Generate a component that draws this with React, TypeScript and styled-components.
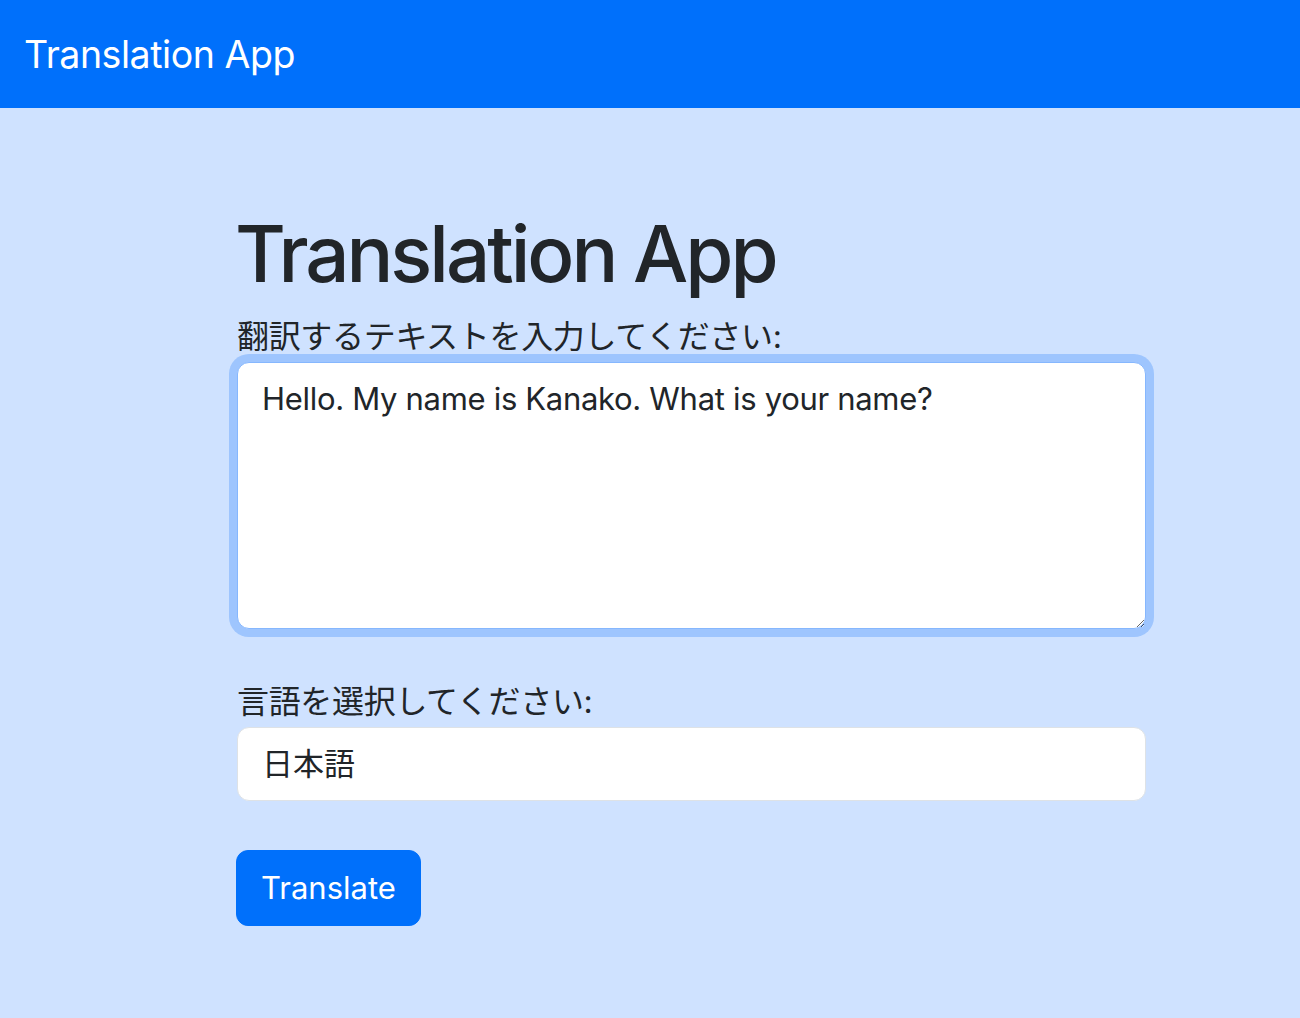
import React from "react";
import styled, { createGlobalStyle } from "styled-components";

const Global = createGlobalStyle`
  html, body { margin: 0; padding: 0; }
  body {
    background: #cfe2ff;
    color: #212529;
    font-family: Inter, "Noto Sans CJK JP", sans-serif;
    min-height: 1018px;
  }
  * { box-sizing: border-box; }
`;

const NavBar = styled.header`
  height: 108px;
  background: #0070fb;
  display: flex;
  align-items: center;
  padding: 0 24px;
`;

const Brand = styled.span`
  color: #ffffff;
  font-size: 37.5px;
  font-weight: 400;
  letter-spacing: -0.012em;
`;

const Main = styled.main`
  display: flex;
  flex-direction: column;
  align-items: flex-start;
  width: 909px;
  margin-left: 237px;
  padding-top: 98px;
`;

const Title = styled.h1`
  margin: 0 0 15px -2px;
  font-size: 78px;
  line-height: 96px;
  font-weight: 500;
  letter-spacing: -0.039em;
`;

const Group = styled.div<{ $mb: number }>`
  display: flex;
  flex-direction: column;
  width: 100%;
  margin-bottom: ${(p) => p.$mb}px;
`;

const Label = styled.label`
  font-size: 32px;
  line-height: 40px;
  margin-bottom: 5px;
  letter-spacing: -0.01em;
`;

const TextArea = styled.textarea`
  width: 100%;
  height: 267px;
  padding: 12px 24px;
  font-family: inherit;
  font-size: 31px;
  line-height: 48px;
  letter-spacing: -0.01em;
  color: #212529;
  background: #fff;
  border: 1px solid #86b7fe;
  border-radius: 12px;
  box-shadow: 0 0 0 8px rgba(13, 110, 253, 0.25);
  outline: none;
`;

const Select = styled.select`
  appearance: none;
  -webkit-appearance: none;
  width: 100%;
  height: 74px;
  padding: 12px 24px;
  font-family: inherit;
  font-size: 31px;
  line-height: 48px;
  color: #212529;
  background: #fff;
  border: 1px solid #dee2e6;
  border-radius: 12px;
  outline: none;
`;

const Button = styled.button`
  height: 76px;
  margin-left: -1px;
  padding: 0 24px;
  font-family: inherit;
  font-size: 31px;
  line-height: 48px;
  color: #fff;
  background: #0070fb;
  border: 1px solid #0070fb;
  border-radius: 12px;
  cursor: pointer;
`;

export default function App() {
  return (
    <>
      <Global />
      <NavBar>
        <Brand>Translation App</Brand>
      </NavBar>
      <Main>
        <Title>Translation App</Title>
        <Group $mb={53}>
          <Label htmlFor="src">翻訳するテキストを入力してください:</Label>
          <TextArea
            id="src"
            defaultValue="Hello. My name is Kanako. What is your name?"
          />
        </Group>
        <Group $mb={49}>
          <Label htmlFor="lang">言語を選択してください:</Label>
          <Select id="lang" defaultValue="ja">
            <option value="ja">日本語</option>
            <option value="en">English</option>
          </Select>
        </Group>
        <Button type="button">Translate</Button>
      </Main>
    </>
  );
}
